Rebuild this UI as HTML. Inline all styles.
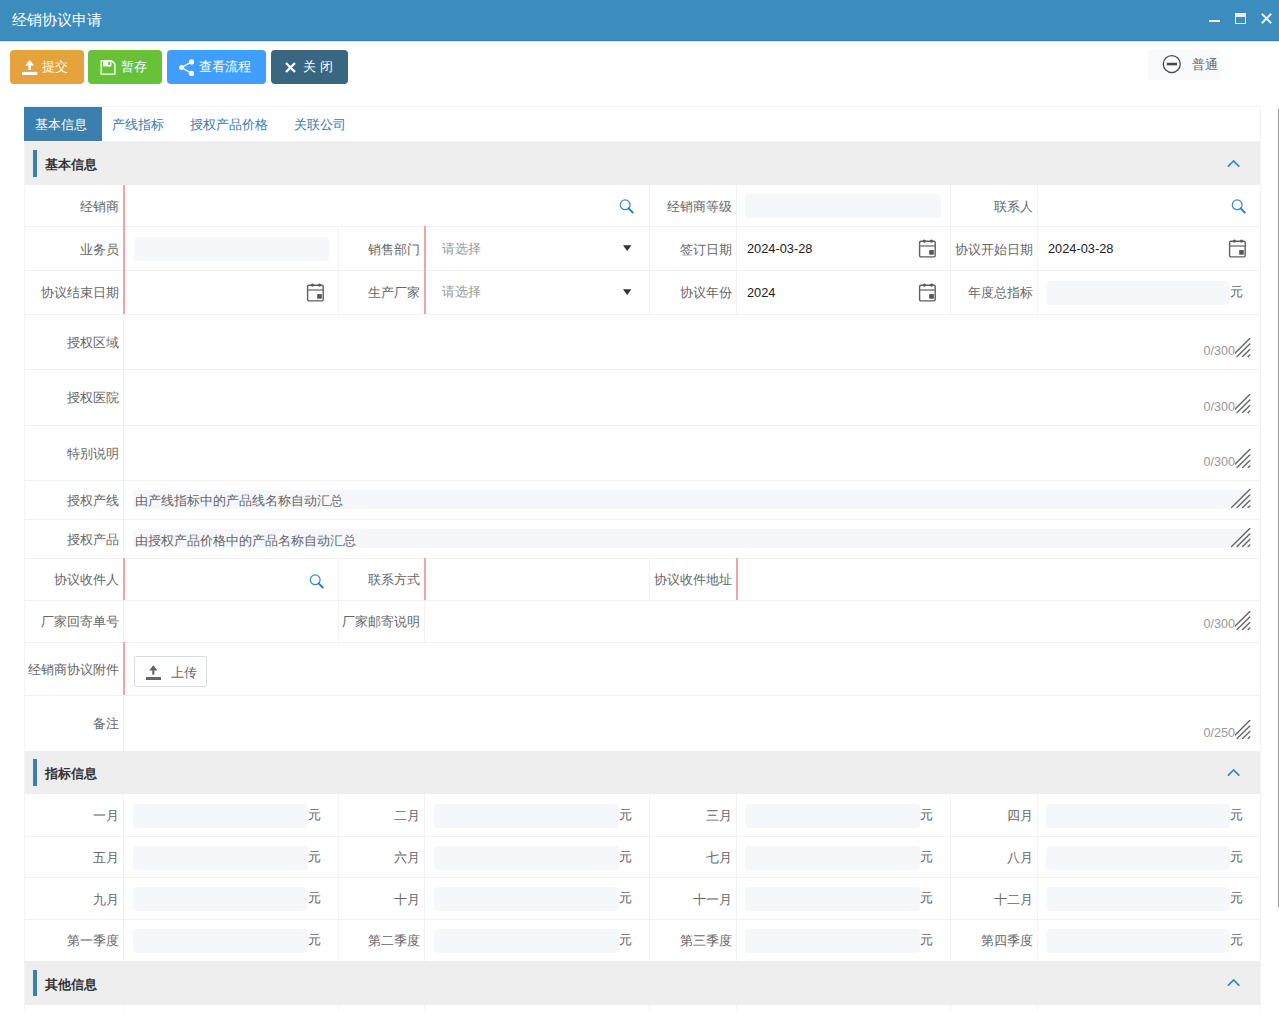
<!DOCTYPE html>
<html><head><meta charset="utf-8"><title>经销协议申请</title>
<style>
html,body{margin:0;padding:0;}
body{width:1279px;height:1016px;overflow:hidden;position:relative;background:#fff;font-family:"Liberation Sans", sans-serif;font-size:12.8px;color:#666;}
body div, body svg{position:absolute;box-sizing:border-box;}
.lb{text-align:right;color:#666;white-space:nowrap;}
.hl{background:#eff2f7;height:1px;}
.btn{border-radius:4px;color:#fff;font-size:13px;}
.sec{background:#eeeeee;}
.sect{font-weight:bold;color:#333;font-size:13px;}
.ph{color:#999;}
.val{color:#222;}
.cnt{color:#999;font-size:12.5px;}
.yuan{color:#666;}
</style></head><body>

<div style="left:0px;top:0px;width:1279px;height:41px;background:#3c8cbd;border-bottom:1px solid #3581b2"></div>
<div style="left:0px;top:41px;width:1279px;height:1px;background:#d6e4ee"></div>
<div style="left:12px;top:0px;width:200px;height:40px;line-height:40px;color:#fff;font-size:15.3px">经销协议申请</div>
<div style="left:1209px;top:20px;width:11px;height:2px;background:#e6eff6"></div>
<div style="left:1235px;top:13px;width:11px;height:11px;border:1px solid #e6eff6;border-top:4px solid #e6eff6"></div>
<svg style="left:1260px;top:12px" width="13" height="13" viewBox="0 0 13 13"><path d="M1.8 1.8 L11.2 11.2 M11.2 1.8 L1.8 11.2" stroke="#e6eff6" stroke-width="2"/></svg>
<div style="left:10px;top:50px;width:74px;height:34px;background:#e6a23c;border-radius:4px"></div>
<svg style="left:21px;top:58px" width="17" height="18" viewBox="0 0 17 18"><path d="M8.7 2 L13.1 7.6 H10 V11.9 H7.4 V7.6 H4.3 Z" fill="#fff"/><rect x="1" y="13.9" width="15.3" height="3.1" fill="#fff"/></svg>
<div style="left:42px;top:50px;width:40px;height:34px;line-height:34px;color:#fff">提交</div>
<div style="left:88px;top:50px;width:74px;height:34px;background:#67c23a;border-radius:4px"></div>
<svg style="left:100px;top:60px" width="16" height="16" viewBox="0 0 16 16"><path d="M1.15 0.75 H11.7 L14.95 4.0 V14.15 H1.15 Z" fill="none" stroke="#fff" stroke-width="1.3" stroke-linejoin="round"/><path d="M3.1 0.75 H11.4 V6.6 H3.1 Z M8.3 1.6 V4.9 H10.2 V1.6 Z" fill="#fff" fill-rule="evenodd"/></svg>
<div style="left:121px;top:50px;width:40px;height:34px;line-height:34px;color:#fff">暂存</div>
<div style="left:167px;top:50px;width:99px;height:34px;background:#409eff;border-radius:4px"></div>
<svg style="left:178px;top:58px" width="18" height="19" viewBox="0 0 18 19"><path d="M3.6 9.5 L13.5 3.9 M3.6 9.5 L13.5 15.4" stroke="#fff" stroke-width="1.3"/><circle cx="3.6" cy="9.5" r="2.5" fill="#fff"/><circle cx="13.5" cy="3.9" r="2.6" fill="#fff"/><circle cx="13.5" cy="15.4" r="2.6" fill="#fff"/></svg>
<div style="left:199px;top:50px;width:60px;height:34px;line-height:34px;color:#fff">查看流程</div>
<div style="left:271px;top:50px;width:77px;height:34px;background:#396681;border-radius:4px"></div>
<svg style="left:284px;top:61px" width="13" height="13" viewBox="0 0 13 13"><path d="M2 2 L11 11 M11 2 L2 11" stroke="#fff" stroke-width="2.4"/></svg>
<div style="left:303px;top:50px;width:40px;height:34px;line-height:34px;color:#fff">关 闭</div>
<div style="left:1148px;top:50px;width:73px;height:30px;background:#f9fafc"></div>
<svg style="left:1161px;top:54px" width="21" height="21" viewBox="0 0 21 21"><circle cx="10.8" cy="10" r="8.5" fill="none" stroke="#4a4a4a" stroke-width="1.25"/><rect x="5.8" y="8.8" width="10.2" height="2.5" fill="#444"/></svg>
<div style="left:1191.5px;top:50px;width:30px;height:30px;line-height:30px;color:#666;font-size:12.8px">普通</div>
<div style="left:1278px;top:109px;width:1px;height:798px;background:#999"></div>
<div style="left:24px;top:106px;width:1237px;height:910px;border:1px solid #f0f4f8;border-bottom:none"></div>
<div style="left:0px;top:1010px;width:1279px;height:6px;background:#fff"></div>
<div style="left:24px;top:107px;width:78.4px;height:34.4px;background:#3a7fae"></div>
<div style="left:25px;top:141px;width:1235px;height:1px;background:#f0f4f8"></div>
<div style="left:34.5px;top:107.5px;width:79px;height:34px;line-height:34px;color:#fff">基本信息</div>
<div style="left:112px;top:107.5px;width:100px;height:34px;line-height:34px;color:#3a7aab">产线指标</div>
<div style="left:190px;top:107.5px;width:100px;height:34px;line-height:34px;color:#3a7aab">授权产品价格</div>
<div style="left:294px;top:107.5px;width:100px;height:34px;line-height:34px;color:#3a7aab">关联公司</div>
<div style="left:25px;top:142px;width:1235px;height:43px;background:#eeeeee"></div>
<div style="left:33px;top:150.3px;width:4px;height:26.4px;background:#3a7fae"></div>
<div style="left:44.8px;top:143.0px;width:200px;height:44px;line-height:44px;font-weight:bold;color:#333;font-size:12.7px">基本信息</div>
<svg style="left:1226px;top:157.5px" width="14" height="9" viewBox="0 0 14 9"><path d="M2.4 8.1 L7.6 2.9 L12.8 8.1" fill="none" stroke="#3a88cc" stroke-width="1.8" stroke-linecap="round"/></svg>
<div style="left:25px;top:226px;width:1235px;height:1px;background:#eff2f7"></div>
<div style="left:25px;top:270px;width:1235px;height:1px;background:#eff2f7"></div>
<div style="left:25px;top:314px;width:1235px;height:1px;background:#eff2f7"></div>
<div style="left:25px;top:369px;width:1235px;height:1px;background:#eff2f7"></div>
<div style="left:25px;top:425px;width:1235px;height:1px;background:#eff2f7"></div>
<div style="left:25px;top:480px;width:1235px;height:1px;background:#eff2f7"></div>
<div style="left:25px;top:519px;width:1235px;height:1px;background:#eff2f7"></div>
<div style="left:25px;top:558px;width:1235px;height:1px;background:#eff2f7"></div>
<div style="left:25px;top:600px;width:1235px;height:1px;background:#eff2f7"></div>
<div style="left:25px;top:642px;width:1235px;height:1px;background:#eff2f7"></div>
<div style="left:25px;top:695px;width:1235px;height:1px;background:#eff2f7"></div>
<div style="left:123px;top:185px;width:2px;height:41px;background:#f4a3a3"></div>
<div style="left:649px;top:185px;width:1px;height:41px;background:#eff2f7"></div>
<div style="left:736px;top:185px;width:1px;height:41px;background:#eff2f7"></div>
<div style="left:950px;top:185px;width:1px;height:41px;background:#eff2f7"></div>
<div style="left:1037px;top:185px;width:1px;height:41px;background:#eff2f7"></div>
<div class="lb" style="left:24px;top:186px;width:95.2px;height:41px;line-height:41px">经销商</div>
<svg style="left:618px;top:198px" width="16" height="16" viewBox="0 0 16 16"><circle cx="7.2" cy="6.8" r="4.9" fill="none" stroke="#3a8ad0" stroke-width="1.25"/><line x1="10.7" y1="10.4" x2="14.7" y2="14.5" stroke="#2f7fcb" stroke-width="2" stroke-linecap="round"/></svg>
<div class="lb" style="left:649px;top:186px;width:83.2px;height:41px;line-height:41px">经销商等级</div>
<div style="left:745px;top:194px;width:196px;height:24px;background:#f5f7fb;border-radius:4px"></div>
<div class="lb" style="left:950px;top:186px;width:83.2px;height:41px;line-height:41px">联系人</div>
<svg style="left:1230px;top:198px" width="16" height="16" viewBox="0 0 16 16"><circle cx="7.2" cy="6.8" r="4.9" fill="none" stroke="#3a8ad0" stroke-width="1.25"/><line x1="10.7" y1="10.4" x2="14.7" y2="14.5" stroke="#2f7fcb" stroke-width="2" stroke-linecap="round"/></svg>
<div style="left:123px;top:226px;width:2px;height:44px;background:#f4a3a3"></div>
<div style="left:338px;top:226px;width:1px;height:44px;background:#eff2f7"></div>
<div style="left:424px;top:226px;width:2px;height:44px;background:#f4a3a3"></div>
<div style="left:649px;top:226px;width:1px;height:44px;background:#eff2f7"></div>
<div style="left:736px;top:226px;width:1px;height:44px;background:#eff2f7"></div>
<div style="left:950px;top:226px;width:1px;height:44px;background:#eff2f7"></div>
<div style="left:1037px;top:226px;width:1px;height:44px;background:#eff2f7"></div>
<div class="lb" style="left:24px;top:228px;width:95.2px;height:44px;line-height:44px">业务员</div>
<div style="left:134px;top:237px;width:195px;height:24px;background:#f5f7fb;border-radius:4px"></div>
<div class="lb" style="left:338px;top:228px;width:82.2px;height:44px;line-height:44px">销售部门</div>
<div style="left:442px;top:227px;width:100px;height:44px;line-height:44px;color:#999">请选择</div>
<svg style="left:622px;top:244px" width="10" height="8" viewBox="0 0 10 8"><path d="M1 1.2 H9.4 L5.2 7 Z" fill="#333"/></svg>
<div class="lb" style="left:649px;top:228px;width:83.2px;height:44px;line-height:44px">签订日期</div>
<div style="left:747px;top:227px;width:100px;height:44px;line-height:44px;color:#222">2024-03-28</div>
<svg style="left:918px;top:239px" width="18" height="19" viewBox="0 0 18 19"><rect x="1.6" y="2.3" width="15.6" height="15.6" rx="1.3" fill="none" stroke="#5f5f5f" stroke-width="1.4"/><line x1="1.6" y1="7.0" x2="17.2" y2="7.0" stroke="#777" stroke-width="1.4"/><circle cx="6.4" cy="2.1" r="1.6" fill="#5a5a5a"/><circle cx="13.5" cy="2.1" r="1.6" fill="#5a5a5a"/><rect x="11.2" y="11.1" width="4.6" height="4.6" fill="#555"/></svg>
<div class="lb" style="left:950px;top:228px;width:83.2px;height:44px;line-height:44px">协议开始日期</div>
<div style="left:1048px;top:227px;width:100px;height:44px;line-height:44px;color:#222">2024-03-28</div>
<svg style="left:1228px;top:239px" width="18" height="19" viewBox="0 0 18 19"><rect x="1.6" y="2.3" width="15.6" height="15.6" rx="1.3" fill="none" stroke="#5f5f5f" stroke-width="1.4"/><line x1="1.6" y1="7.0" x2="17.2" y2="7.0" stroke="#777" stroke-width="1.4"/><circle cx="6.4" cy="2.1" r="1.6" fill="#5a5a5a"/><circle cx="13.5" cy="2.1" r="1.6" fill="#5a5a5a"/><rect x="11.2" y="11.1" width="4.6" height="4.6" fill="#555"/></svg>
<div style="left:123px;top:270px;width:2px;height:44px;background:#f4a3a3"></div>
<div style="left:338px;top:270px;width:1px;height:44px;background:#eff2f7"></div>
<div style="left:424px;top:270px;width:2px;height:44px;background:#f4a3a3"></div>
<div style="left:649px;top:270px;width:1px;height:44px;background:#eff2f7"></div>
<div style="left:736px;top:270px;width:1px;height:44px;background:#eff2f7"></div>
<div style="left:950px;top:270px;width:1px;height:44px;background:#eff2f7"></div>
<div style="left:1037px;top:270px;width:1px;height:44px;background:#eff2f7"></div>
<div class="lb" style="left:24px;top:271px;width:95.2px;height:44px;line-height:44px">协议结束日期</div>
<svg style="left:306px;top:283px" width="18" height="19" viewBox="0 0 18 19"><rect x="1.6" y="2.3" width="15.6" height="15.6" rx="1.3" fill="none" stroke="#5f5f5f" stroke-width="1.4"/><line x1="1.6" y1="7.0" x2="17.2" y2="7.0" stroke="#777" stroke-width="1.4"/><circle cx="6.4" cy="2.1" r="1.6" fill="#5a5a5a"/><circle cx="13.5" cy="2.1" r="1.6" fill="#5a5a5a"/><rect x="11.2" y="11.1" width="4.6" height="4.6" fill="#555"/></svg>
<div class="lb" style="left:338px;top:271px;width:82.2px;height:44px;line-height:44px">生产厂家</div>
<div style="left:442px;top:270px;width:100px;height:44px;line-height:44px;color:#999">请选择</div>
<svg style="left:622px;top:288px" width="10" height="8" viewBox="0 0 10 8"><path d="M1 1.2 H9.4 L5.2 7 Z" fill="#333"/></svg>
<div class="lb" style="left:649px;top:271px;width:83.2px;height:44px;line-height:44px">协议年份</div>
<div style="left:747px;top:271px;width:100px;height:44px;line-height:44px;color:#222">2024</div>
<svg style="left:918px;top:283px" width="18" height="19" viewBox="0 0 18 19"><rect x="1.6" y="2.3" width="15.6" height="15.6" rx="1.3" fill="none" stroke="#5f5f5f" stroke-width="1.4"/><line x1="1.6" y1="7.0" x2="17.2" y2="7.0" stroke="#777" stroke-width="1.4"/><circle cx="6.4" cy="2.1" r="1.6" fill="#5a5a5a"/><circle cx="13.5" cy="2.1" r="1.6" fill="#5a5a5a"/><rect x="11.2" y="11.1" width="4.6" height="4.6" fill="#555"/></svg>
<div class="lb" style="left:950px;top:271px;width:83.2px;height:44px;line-height:44px">年度总指标</div>
<div style="left:1046px;top:281px;width:184px;height:24px;background:#f5f7fb;border-radius:4px"></div>
<div style="left:1230px;top:270px;width:20px;height:44px;line-height:44px;">元</div>
<div style="left:123px;top:314px;width:1px;height:55px;background:#eff2f7"></div>
<div class="lb" style="left:24px;top:315px;width:95.2px;height:55px;line-height:55px">授权区域</div>
<svg style="left:1231px;top:338px" width="20" height="20" viewBox="0 0 20 20"><line x1="0.6" y1="18.6" x2="18.8" y2="0.4" stroke="#666" stroke-width="1.35" stroke-linecap="round"/><line x1="6.1" y1="18.6" x2="18.8" y2="5.9" stroke="#666" stroke-width="1.35" stroke-linecap="round"/><line x1="11.6" y1="18.6" x2="18.8" y2="11.4" stroke="#666" stroke-width="1.35" stroke-linecap="round"/><line x1="17.1" y1="18.6" x2="18.8" y2="16.9" stroke="#666" stroke-width="1.35" stroke-linecap="round"/></svg>
<div style="left:1195px;top:343px;width:40px;height:16px;line-height:16px;background:#fff;text-align:right;color:#999;font-size:12.6px">0/300</div>
<div style="left:123px;top:369px;width:1px;height:56px;background:#eff2f7"></div>
<div class="lb" style="left:24px;top:370px;width:95.2px;height:56px;line-height:56px">授权医院</div>
<svg style="left:1231px;top:394px" width="20" height="20" viewBox="0 0 20 20"><line x1="0.6" y1="18.6" x2="18.8" y2="0.4" stroke="#666" stroke-width="1.35" stroke-linecap="round"/><line x1="6.1" y1="18.6" x2="18.8" y2="5.9" stroke="#666" stroke-width="1.35" stroke-linecap="round"/><line x1="11.6" y1="18.6" x2="18.8" y2="11.4" stroke="#666" stroke-width="1.35" stroke-linecap="round"/><line x1="17.1" y1="18.6" x2="18.8" y2="16.9" stroke="#666" stroke-width="1.35" stroke-linecap="round"/></svg>
<div style="left:1195px;top:399px;width:40px;height:16px;line-height:16px;background:#fff;text-align:right;color:#999;font-size:12.6px">0/300</div>
<div style="left:123px;top:425px;width:1px;height:55px;background:#eff2f7"></div>
<div class="lb" style="left:24px;top:426px;width:95.2px;height:55px;line-height:55px">特别说明</div>
<svg style="left:1231px;top:449px" width="20" height="20" viewBox="0 0 20 20"><line x1="0.6" y1="18.6" x2="18.8" y2="0.4" stroke="#666" stroke-width="1.35" stroke-linecap="round"/><line x1="6.1" y1="18.6" x2="18.8" y2="5.9" stroke="#666" stroke-width="1.35" stroke-linecap="round"/><line x1="11.6" y1="18.6" x2="18.8" y2="11.4" stroke="#666" stroke-width="1.35" stroke-linecap="round"/><line x1="17.1" y1="18.6" x2="18.8" y2="16.9" stroke="#666" stroke-width="1.35" stroke-linecap="round"/></svg>
<div style="left:1195px;top:454px;width:40px;height:16px;line-height:16px;background:#fff;text-align:right;color:#999;font-size:12.6px">0/300</div>
<div style="left:123px;top:480px;width:1px;height:39px;background:#eff2f7"></div>
<div class="lb" style="left:24px;top:481px;width:95.2px;height:39px;line-height:39px">授权产线</div>
<div style="left:133px;top:490px;width:1118px;height:19px;background:#f5f7fb;border-radius:4px"></div>
<div style="left:135px;top:491px;width:400px;height:19px;line-height:19px;color:#666">由产线指标中的产品线名称自动汇总</div>
<svg style="left:1231px;top:488.5px" width="20" height="20" viewBox="0 0 20 20"><line x1="0.6" y1="18.6" x2="18.8" y2="0.4" stroke="#666" stroke-width="1.35" stroke-linecap="round"/><line x1="6.1" y1="18.6" x2="18.8" y2="5.9" stroke="#666" stroke-width="1.35" stroke-linecap="round"/><line x1="11.6" y1="18.6" x2="18.8" y2="11.4" stroke="#666" stroke-width="1.35" stroke-linecap="round"/><line x1="17.1" y1="18.6" x2="18.8" y2="16.9" stroke="#666" stroke-width="1.35" stroke-linecap="round"/></svg>
<div style="left:123px;top:519px;width:1px;height:39px;background:#eff2f7"></div>
<div class="lb" style="left:24px;top:520px;width:95.2px;height:39px;line-height:39px">授权产品</div>
<div style="left:133px;top:529px;width:1118px;height:19px;background:#f5f7fb;border-radius:4px"></div>
<div style="left:135px;top:531px;width:400px;height:19px;line-height:19px;color:#666">由授权产品价格中的产品名称自动汇总</div>
<svg style="left:1231px;top:527.5px" width="20" height="20" viewBox="0 0 20 20"><line x1="0.6" y1="18.6" x2="18.8" y2="0.4" stroke="#666" stroke-width="1.35" stroke-linecap="round"/><line x1="6.1" y1="18.6" x2="18.8" y2="5.9" stroke="#666" stroke-width="1.35" stroke-linecap="round"/><line x1="11.6" y1="18.6" x2="18.8" y2="11.4" stroke="#666" stroke-width="1.35" stroke-linecap="round"/><line x1="17.1" y1="18.6" x2="18.8" y2="16.9" stroke="#666" stroke-width="1.35" stroke-linecap="round"/></svg>
<div style="left:123px;top:558px;width:2px;height:42px;background:#f4a3a3"></div>
<div style="left:338px;top:558px;width:1px;height:42px;background:#eff2f7"></div>
<div style="left:424px;top:558px;width:2px;height:42px;background:#f4a3a3"></div>
<div style="left:649px;top:558px;width:1px;height:42px;background:#eff2f7"></div>
<div style="left:736px;top:558px;width:2px;height:42px;background:#f4a3a3"></div>
<div class="lb" style="left:24px;top:559px;width:95.2px;height:42px;line-height:42px">协议收件人</div>
<svg style="left:308px;top:573px" width="16" height="16" viewBox="0 0 16 16"><circle cx="7.2" cy="6.8" r="4.9" fill="none" stroke="#3a8ad0" stroke-width="1.25"/><line x1="10.7" y1="10.4" x2="14.7" y2="14.5" stroke="#2f7fcb" stroke-width="2" stroke-linecap="round"/></svg>
<div class="lb" style="left:338px;top:559px;width:82.2px;height:42px;line-height:42px">联系方式</div>
<div class="lb" style="left:649px;top:559px;width:83.2px;height:42px;line-height:42px">协议收件地址</div>
<div style="left:123px;top:600px;width:1px;height:42px;background:#eff2f7"></div>
<div style="left:338px;top:600px;width:1px;height:42px;background:#eff2f7"></div>
<div style="left:424px;top:600px;width:1px;height:42px;background:#eff2f7"></div>
<div class="lb" style="left:24px;top:601px;width:95.2px;height:42px;line-height:42px">厂家回寄单号</div>
<div class="lb" style="left:338px;top:601px;width:82.2px;height:42px;line-height:42px">厂家邮寄说明</div>
<svg style="left:1231px;top:611px" width="20" height="20" viewBox="0 0 20 20"><line x1="0.6" y1="18.6" x2="18.8" y2="0.4" stroke="#666" stroke-width="1.35" stroke-linecap="round"/><line x1="6.1" y1="18.6" x2="18.8" y2="5.9" stroke="#666" stroke-width="1.35" stroke-linecap="round"/><line x1="11.6" y1="18.6" x2="18.8" y2="11.4" stroke="#666" stroke-width="1.35" stroke-linecap="round"/><line x1="17.1" y1="18.6" x2="18.8" y2="16.9" stroke="#666" stroke-width="1.35" stroke-linecap="round"/></svg>
<div style="left:1195px;top:616px;width:40px;height:16px;line-height:16px;background:#fff;text-align:right;color:#999;font-size:12.6px">0/300</div>
<div style="left:123px;top:642px;width:2px;height:53px;background:#f4a3a3"></div>
<div class="lb" style="left:24px;top:643px;width:95.2px;height:53px;line-height:53px">经销商协议附件</div>
<div style="left:134px;top:656px;width:73px;height:31px;border:1px solid #d5dee8;border-radius:2px;background:#fff"></div>
<svg style="left:145px;top:664px" width="17" height="17" viewBox="0 0 17 17"><path d="M8.3 1.3 L12.4 6.6 H9.3 V10.8 H7.3 V6.6 H4.2 Z" fill="#636363"/><rect x="1" y="13" width="15" height="3" fill="#666"/></svg>
<div style="left:171px;top:656.5px;width:30px;height:32px;line-height:32px;">上传</div>
<div style="left:123px;top:695px;width:1px;height:56px;background:#eff2f7"></div>
<div class="lb" style="left:24px;top:696px;width:95.2px;height:56px;line-height:56px">备注</div>
<svg style="left:1231px;top:720px" width="20" height="20" viewBox="0 0 20 20"><line x1="0.6" y1="18.6" x2="18.8" y2="0.4" stroke="#666" stroke-width="1.35" stroke-linecap="round"/><line x1="6.1" y1="18.6" x2="18.8" y2="5.9" stroke="#666" stroke-width="1.35" stroke-linecap="round"/><line x1="11.6" y1="18.6" x2="18.8" y2="11.4" stroke="#666" stroke-width="1.35" stroke-linecap="round"/><line x1="17.1" y1="18.6" x2="18.8" y2="16.9" stroke="#666" stroke-width="1.35" stroke-linecap="round"/></svg>
<div style="left:1195px;top:725px;width:40px;height:16px;line-height:16px;background:#fff;text-align:right;color:#999;font-size:12.6px">0/250</div>
<div style="left:25px;top:751px;width:1235px;height:43px;background:#eeeeee"></div>
<div style="left:33px;top:759.3px;width:4px;height:26.4px;background:#3a7fae"></div>
<div style="left:44.8px;top:752.0px;width:200px;height:44px;line-height:44px;font-weight:bold;color:#333;font-size:12.7px">指标信息</div>
<svg style="left:1226px;top:766.5px" width="14" height="9" viewBox="0 0 14 9"><path d="M2.4 8.1 L7.6 2.9 L12.8 8.1" fill="none" stroke="#3a88cc" stroke-width="1.8" stroke-linecap="round"/></svg>
<div style="left:25px;top:836px;width:1235px;height:1px;background:#eff2f7"></div>
<div style="left:25px;top:877px;width:1235px;height:1px;background:#eff2f7"></div>
<div style="left:25px;top:919px;width:1235px;height:1px;background:#eff2f7"></div>
<div style="left:123px;top:794px;width:1px;height:42px;background:#eff2f7"></div>
<div class="lb" style="left:24px;top:795px;width:95.2px;height:42px;line-height:42px">一月</div>
<div style="left:133px;top:804px;width:175px;height:24px;background:#f5f7fb;border-radius:4px"></div>
<div style="left:308px;top:794px;width:20px;height:42px;line-height:42px;">元</div>
<div style="left:338px;top:794px;width:1px;height:42px;background:#eff2f7"></div>
<div style="left:424px;top:794px;width:1px;height:42px;background:#eff2f7"></div>
<div class="lb" style="left:338px;top:795px;width:82.2px;height:42px;line-height:42px">二月</div>
<div style="left:434px;top:804px;width:185px;height:24px;background:#f5f7fb;border-radius:4px"></div>
<div style="left:619px;top:794px;width:20px;height:42px;line-height:42px;">元</div>
<div style="left:649px;top:794px;width:1px;height:42px;background:#eff2f7"></div>
<div style="left:736px;top:794px;width:1px;height:42px;background:#eff2f7"></div>
<div class="lb" style="left:649px;top:795px;width:83.2px;height:42px;line-height:42px">三月</div>
<div style="left:745px;top:804px;width:175px;height:24px;background:#f5f7fb;border-radius:4px"></div>
<div style="left:920px;top:794px;width:20px;height:42px;line-height:42px;">元</div>
<div style="left:950px;top:794px;width:1px;height:42px;background:#eff2f7"></div>
<div style="left:1037px;top:794px;width:1px;height:42px;background:#eff2f7"></div>
<div class="lb" style="left:950px;top:795px;width:83.2px;height:42px;line-height:42px">四月</div>
<div style="left:1046px;top:804px;width:184px;height:24px;background:#f5f7fb;border-radius:4px"></div>
<div style="left:1230px;top:794px;width:20px;height:42px;line-height:42px;">元</div>
<div style="left:123px;top:836px;width:1px;height:41px;background:#eff2f7"></div>
<div class="lb" style="left:24px;top:837px;width:95.2px;height:41px;line-height:41px">五月</div>
<div style="left:133px;top:846px;width:175px;height:24px;background:#f5f7fb;border-radius:4px"></div>
<div style="left:308px;top:836px;width:20px;height:41px;line-height:41px;">元</div>
<div style="left:338px;top:836px;width:1px;height:41px;background:#eff2f7"></div>
<div style="left:424px;top:836px;width:1px;height:41px;background:#eff2f7"></div>
<div class="lb" style="left:338px;top:837px;width:82.2px;height:41px;line-height:41px">六月</div>
<div style="left:434px;top:846px;width:185px;height:24px;background:#f5f7fb;border-radius:4px"></div>
<div style="left:619px;top:836px;width:20px;height:41px;line-height:41px;">元</div>
<div style="left:649px;top:836px;width:1px;height:41px;background:#eff2f7"></div>
<div style="left:736px;top:836px;width:1px;height:41px;background:#eff2f7"></div>
<div class="lb" style="left:649px;top:837px;width:83.2px;height:41px;line-height:41px">七月</div>
<div style="left:745px;top:846px;width:175px;height:24px;background:#f5f7fb;border-radius:4px"></div>
<div style="left:920px;top:836px;width:20px;height:41px;line-height:41px;">元</div>
<div style="left:950px;top:836px;width:1px;height:41px;background:#eff2f7"></div>
<div style="left:1037px;top:836px;width:1px;height:41px;background:#eff2f7"></div>
<div class="lb" style="left:950px;top:837px;width:83.2px;height:41px;line-height:41px">八月</div>
<div style="left:1046px;top:846px;width:184px;height:24px;background:#f5f7fb;border-radius:4px"></div>
<div style="left:1230px;top:836px;width:20px;height:41px;line-height:41px;">元</div>
<div style="left:123px;top:877px;width:1px;height:42px;background:#eff2f7"></div>
<div class="lb" style="left:24px;top:879px;width:95.2px;height:42px;line-height:42px">九月</div>
<div style="left:133px;top:887px;width:175px;height:24px;background:#f5f7fb;border-radius:4px"></div>
<div style="left:308px;top:877px;width:20px;height:42px;line-height:42px;">元</div>
<div style="left:338px;top:877px;width:1px;height:42px;background:#eff2f7"></div>
<div style="left:424px;top:877px;width:1px;height:42px;background:#eff2f7"></div>
<div class="lb" style="left:338px;top:879px;width:82.2px;height:42px;line-height:42px">十月</div>
<div style="left:434px;top:887px;width:185px;height:24px;background:#f5f7fb;border-radius:4px"></div>
<div style="left:619px;top:877px;width:20px;height:42px;line-height:42px;">元</div>
<div style="left:649px;top:877px;width:1px;height:42px;background:#eff2f7"></div>
<div style="left:736px;top:877px;width:1px;height:42px;background:#eff2f7"></div>
<div class="lb" style="left:649px;top:879px;width:83.2px;height:42px;line-height:42px">十一月</div>
<div style="left:745px;top:887px;width:175px;height:24px;background:#f5f7fb;border-radius:4px"></div>
<div style="left:920px;top:877px;width:20px;height:42px;line-height:42px;">元</div>
<div style="left:950px;top:877px;width:1px;height:42px;background:#eff2f7"></div>
<div style="left:1037px;top:877px;width:1px;height:42px;background:#eff2f7"></div>
<div class="lb" style="left:950px;top:879px;width:83.2px;height:42px;line-height:42px">十二月</div>
<div style="left:1046px;top:887px;width:184px;height:24px;background:#f5f7fb;border-radius:4px"></div>
<div style="left:1230px;top:877px;width:20px;height:42px;line-height:42px;">元</div>
<div style="left:123px;top:919px;width:1px;height:42px;background:#eff2f7"></div>
<div class="lb" style="left:24px;top:920px;width:95.2px;height:42px;line-height:42px">第一季度</div>
<div style="left:133px;top:929px;width:175px;height:24px;background:#f5f7fb;border-radius:4px"></div>
<div style="left:308px;top:919px;width:20px;height:42px;line-height:42px;">元</div>
<div style="left:338px;top:919px;width:1px;height:42px;background:#eff2f7"></div>
<div style="left:424px;top:919px;width:1px;height:42px;background:#eff2f7"></div>
<div class="lb" style="left:338px;top:920px;width:82.2px;height:42px;line-height:42px">第二季度</div>
<div style="left:434px;top:929px;width:185px;height:24px;background:#f5f7fb;border-radius:4px"></div>
<div style="left:619px;top:919px;width:20px;height:42px;line-height:42px;">元</div>
<div style="left:649px;top:919px;width:1px;height:42px;background:#eff2f7"></div>
<div style="left:736px;top:919px;width:1px;height:42px;background:#eff2f7"></div>
<div class="lb" style="left:649px;top:920px;width:83.2px;height:42px;line-height:42px">第三季度</div>
<div style="left:745px;top:929px;width:175px;height:24px;background:#f5f7fb;border-radius:4px"></div>
<div style="left:920px;top:919px;width:20px;height:42px;line-height:42px;">元</div>
<div style="left:950px;top:919px;width:1px;height:42px;background:#eff2f7"></div>
<div style="left:1037px;top:919px;width:1px;height:42px;background:#eff2f7"></div>
<div class="lb" style="left:950px;top:920px;width:83.2px;height:42px;line-height:42px">第四季度</div>
<div style="left:1046px;top:929px;width:184px;height:24px;background:#f5f7fb;border-radius:4px"></div>
<div style="left:1230px;top:919px;width:20px;height:42px;line-height:42px;">元</div>
<div style="left:25px;top:961px;width:1235px;height:44px;background:#eeeeee"></div>
<div style="left:33px;top:969.8px;width:4px;height:26.4px;background:#3a7fae"></div>
<div style="left:44.8px;top:962.5px;width:200px;height:44px;line-height:44px;font-weight:bold;color:#333;font-size:12.7px">其他信息</div>
<svg style="left:1226px;top:977.0px" width="14" height="9" viewBox="0 0 14 9"><path d="M2.4 8.1 L7.6 2.9 L12.8 8.1" fill="none" stroke="#3a88cc" stroke-width="1.8" stroke-linecap="round"/></svg>
<div style="left:123px;top:1005px;width:1px;height:5px;background:#eff2f7"></div>
<div style="left:338px;top:1005px;width:1px;height:5px;background:#eff2f7"></div>
<div style="left:424px;top:1005px;width:1px;height:5px;background:#eff2f7"></div>
<div style="left:649px;top:1005px;width:1px;height:5px;background:#eff2f7"></div>
<div style="left:736px;top:1005px;width:1px;height:5px;background:#eff2f7"></div>
<div style="left:950px;top:1005px;width:1px;height:5px;background:#eff2f7"></div>
<div style="left:1037px;top:1005px;width:1px;height:5px;background:#eff2f7"></div>
</body></html>
